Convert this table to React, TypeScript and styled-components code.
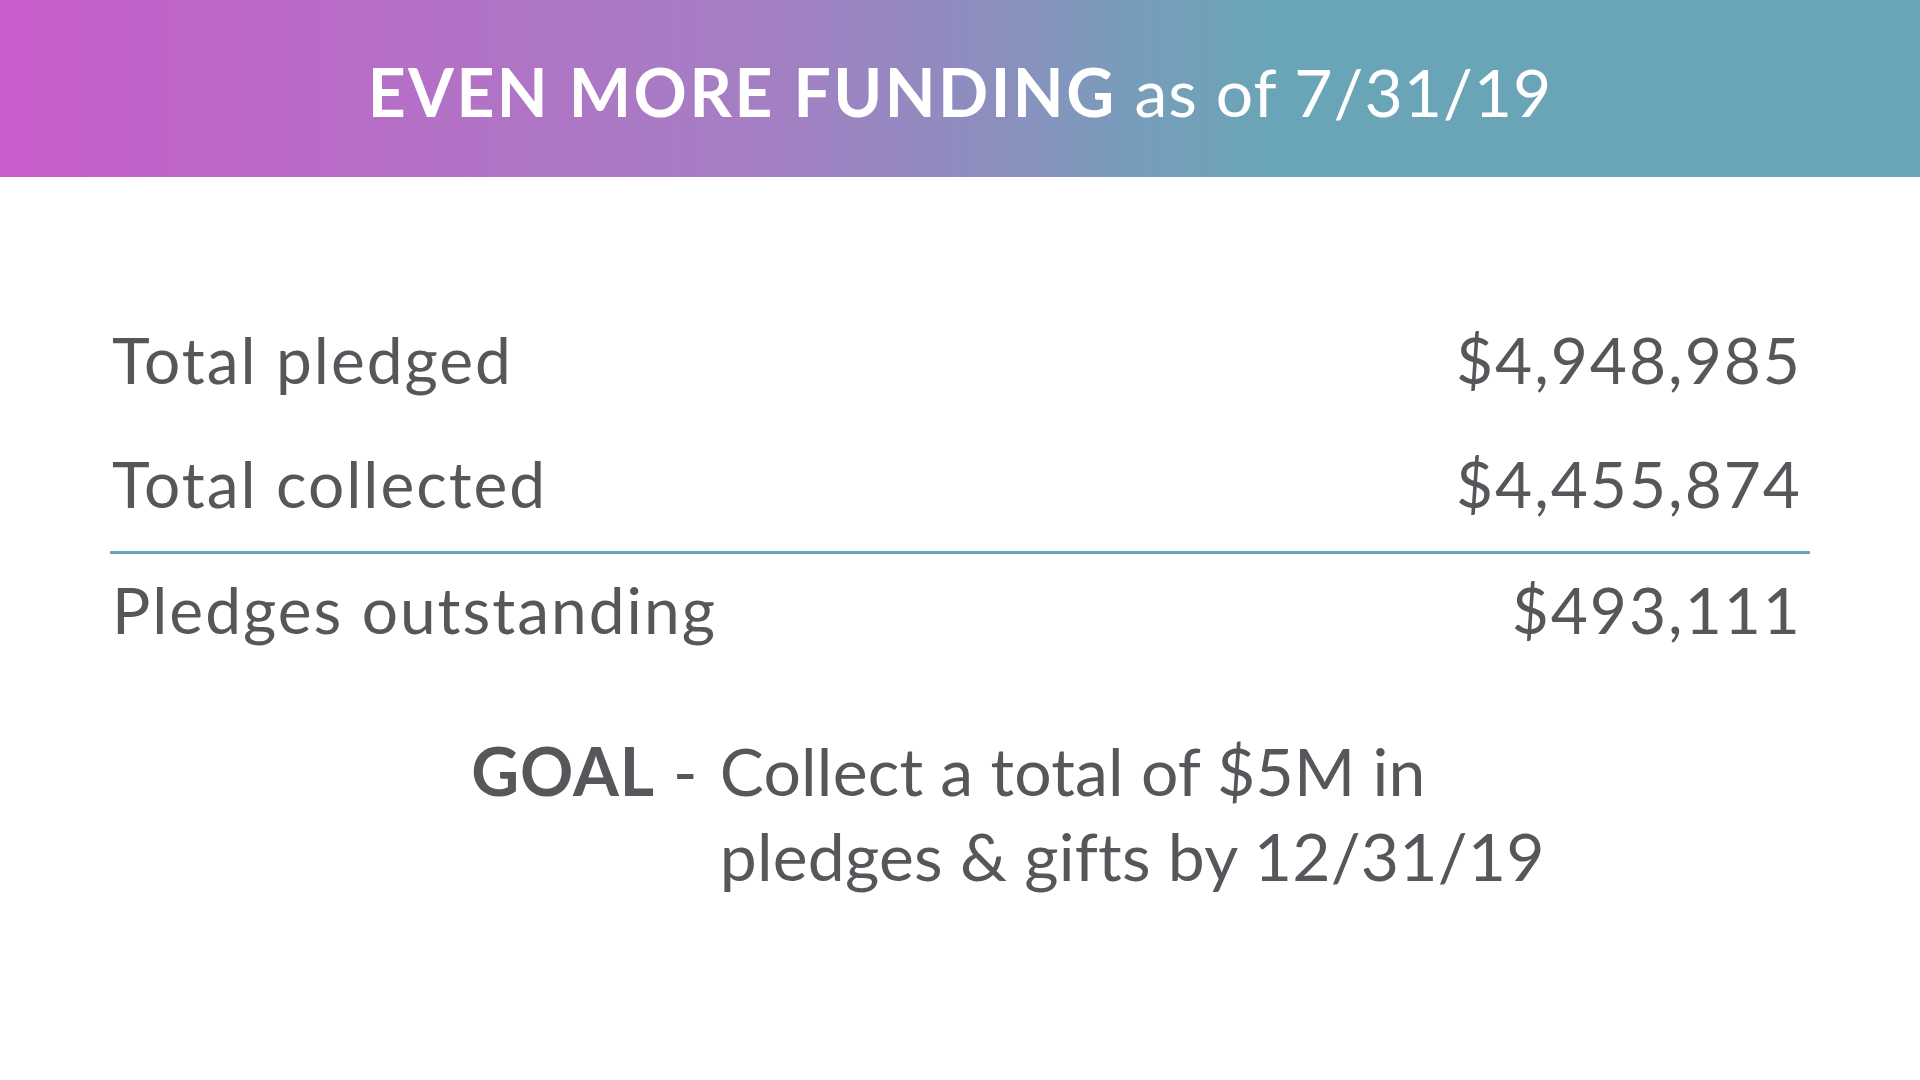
import React from "react";
import styled, { createGlobalStyle } from "styled-components";

const GlobalStyle = createGlobalStyle`
  html, body { margin: 0; padding: 0; background: #ffffff; }
  body { font-family: Lato, "Open Sans", sans-serif; }
  * { box-sizing: border-box; }
`;

const Page = styled.div`
  width: 1920px;
  height: 1080px;
  display: flex;
  flex-direction: column;
  background: #ffffff;
  overflow: hidden;
`;

const Header = styled.header`
  height: 177px;
  display: flex;
  align-items: center;
  justify-content: center;
  background: linear-gradient(
    90deg,
    #c85ccc 0%,
    #b470c6 22%,
    #a47fc3 40%,
    #8b8fbe 52%,
    #7a9bbb 58%,
    #6aa5b7 66%,
    #68a5b6 100%
  );
`;

const Title = styled.h1`
  margin: 0;
  padding-top: 6px;
  color: #ffffff;
  font-family: Lato, sans-serif;
  font-size: 66px;
  font-weight: 400;
  letter-spacing: 1px;
  white-space: nowrap;
`;

const TitleStrong = styled.span`
  font-weight: 700;
  letter-spacing: 2.5px;
`;

const Body = styled.main`
  display: flex;
  flex-direction: column;
  padding: 143px 110px 0 110px;
  color: #55575a;
`;

const Table = styled.div`
  display: flex;
  flex-direction: column;
`;

const Row = styled.div<{ $divider?: boolean; $afterDivider?: boolean }>`
  display: flex;
  justify-content: space-between;
  align-items: baseline;
  height: ${(p) => (p.$divider ? "110px" : "124px")};
  padding: ${(p) => (p.$afterDivider ? "16px" : "0")} 8px 0 2px;
  font-size: 64px;
  line-height: 80px;
  letter-spacing: 2px;
  border-bottom: ${(p) => (p.$divider ? "3px solid #68a5b6" : "none")};
`;

const Label = styled.span`
  font-weight: 400;
`;

const Value = styled.span`
  font-weight: 400;
  letter-spacing: 2px;
`;

const Goal = styled.div`
  display: flex;
  justify-content: center;
  margin-top: 50px;
  font-size: 66px;
  line-height: 85px;
  padding-left: 96px;
  letter-spacing: 0.2px;
`;

const GoalLead = styled.div`
  white-space: pre;
  padding-right: 22px;
`;

const GoalStrong = styled.span`
  font-weight: 700;
  letter-spacing: 1px;
  margin-right: 18px;
`;

const GoalText = styled.div`
  display: flex;
  flex-direction: column;
`;

export default function App() {
  return (
    <Page>
      <GlobalStyle />
      <Header>
        <Title>
          <TitleStrong>EVEN MORE FUNDING</TitleStrong> as of 7/31/19
        </Title>
      </Header>
      <Body>
        <Table>
          <Row>
            <Label>Total pledged</Label>
            <Value>$4,948,985</Value>
          </Row>
          <Row $divider>
            <Label>Total collected</Label>
            <Value>$4,455,874</Value>
          </Row>
          <Row $afterDivider>
            <Label>Pledges outstanding</Label>
            <Value>$493,111</Value>
          </Row>
        </Table>
        <Goal>
          <GoalLead>
            <GoalStrong>GOAL</GoalStrong>-
          </GoalLead>
          <GoalText>
            <span>Collect a total of $5M in</span>
            <span>pledges &amp; gifts by 12/31/19</span>
          </GoalText>
        </Goal>
      </Body>
    </Page>
  );
}
